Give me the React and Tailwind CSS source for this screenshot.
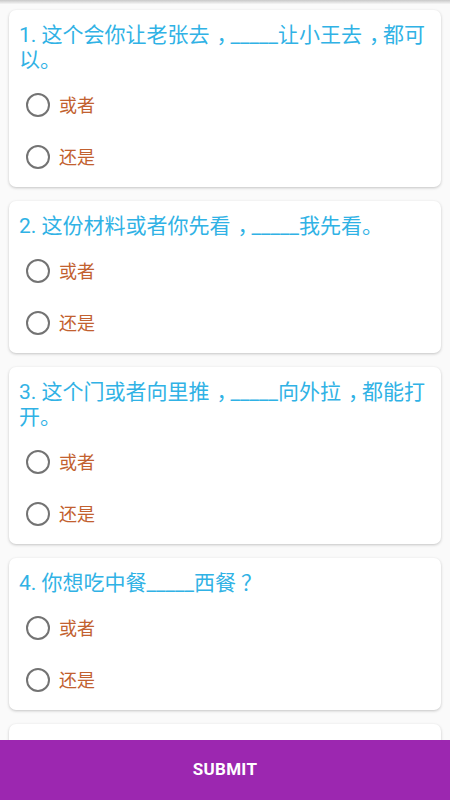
import React, { useState } from 'react';

// 5th card is only peeking out from under the submit bar, its text is hidden
const questions = [
    { id: 1, text: '1. 这个会你让老张去，_____让小王去，都可以。' },
    { id: 2, text: '2. 这份材料或者你先看，_____我先看。' },
    { id: 3, text: '3. 这个门或者向里推，_____向外拉，都能打开。' },
    { id: 4, text: '4. 你想吃中餐_____西餐？' },
    { id: 5, text: '' },
];

const options = ['或者', '还是'];

// full-width comma and question mark sit centred in their cell in the screenshot
const renderText = (text) =>
    text.split(/([，？])/).map((part, i) =>
        part === '，' ? (
            <span key={i} className="inline-block translate-x-[7px]">{part}</span>
        ) : part === '？' ? (
            <span key={i} className="inline-block translate-x-[5px]">{part}</span>
        ) : (
            part
        )
    );

const App = () => {
    const [answers, setAnswers] = useState({});

    return (
        <div className="flex flex-col h-screen bg-[#fafafa] font-['Roboto','Noto_Sans_CJK_SC',sans-serif]">
            {/* Questions */}
            <div className="flex-1 overflow-hidden">
                <div className="h-[4px] bg-gradient-to-b from-[#c8c8c8] to-[#f5f5f5]" />
                <div className="flex flex-col gap-[14px] px-[9px] pt-[6px]">
                    {questions.map(q => (
                        <div
                            key={q.id}
                            className="bg-white rounded-[7px] pt-[13px] pb-[4px] shadow-[0_1px_3px_rgba(0,0,0,0.22)]"
                        >
                            <p className="min-h-[25px] pl-[10px] pr-[6px] text-[21px] leading-[25px] text-[#30b2e5]">
                                {renderText(q.text)}
                            </p>
                            <div className="mt-[6px]">
                                {options.map(opt => (
                                    <label
                                        key={opt}
                                        className="flex items-center h-[52px] pl-[17px] cursor-pointer"
                                        onClick={() => setAnswers({ ...answers, [q.id]: opt })}
                                    >
                                        <span className="flex items-center justify-center w-[24px] h-[24px] rounded-full border-2 border-[#737373]">
                                            {answers[q.id] === opt && (
                                                <span className="w-[12px] h-[12px] rounded-full bg-[#9c27b0]" />
                                            )}
                                        </span>
                                        <span className="ml-[9px] text-[18px] text-[#c2612f]">{opt}</span>
                                    </label>
                                ))}
                            </div>
                        </div>
                    ))}
                </div>
            </div>

            {/* Submit */}
            <button className="h-[60px] shrink-0 bg-[#9c27b0] text-white text-[17px] font-bold tracking-[0.3px]">
                SUBMIT
            </button>
        </div>
    );
};

export default App;
